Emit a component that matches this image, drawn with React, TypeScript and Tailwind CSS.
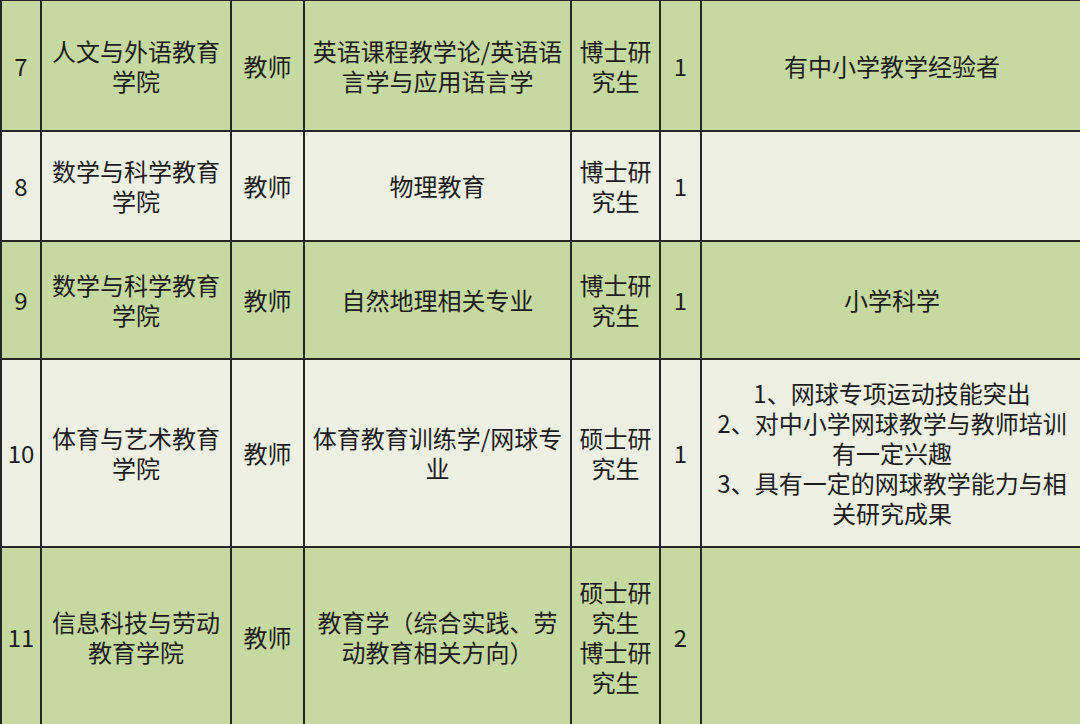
import React from "react";

const G = "bg-[#c6d9a0]";
const L = "bg-[#edf0e3]";

type Row = {
  bg: string;
  h: string;
  no: string;
  college: React.ReactNode;
  pos: string;
  major: React.ReactNode;
  degree: React.ReactNode;
  num: string;
  note: React.ReactNode;
};

const rows: Row[] = [
  {
    bg: G,
    h: "h-[131px]",
    no: "7",
    college: (<>人文与外语教育<br />学院</>),
    pos: "教师",
    major: (<>英语课程教学论/英语语<br />言学与应用语言学</>),
    degree: (<>博士研<br />究生</>),
    num: "1",
    note: "有中小学教学经验者",
  },
  {
    bg: L,
    h: "h-[110px]",
    no: "8",
    college: (<>数学与科学教育<br />学院</>),
    pos: "教师",
    major: "物理教育",
    degree: (<>博士研<br />究生</>),
    num: "1",
    note: "",
  },
  {
    bg: G,
    h: "h-[118px]",
    no: "9",
    college: (<>数学与科学教育<br />学院</>),
    pos: "教师",
    major: "自然地理相关专业",
    degree: (<>博士研<br />究生</>),
    num: "1",
    note: "小学科学",
  },
  {
    bg: L,
    h: "h-[188px]",
    no: "10",
    college: (<>体育与艺术教育<br />学院</>),
    pos: "教师",
    major: (<>体育教育训练学/网球专<br />业</>),
    degree: (<>硕士研<br />究生</>),
    num: "1",
    note: (
      <>
        1、网球专项运动技能突出
        <br />
        2、对中小学网球教学与教师培训
        <br />
        有一定兴趣
        <br />
        3、具有一定的网球教学能力与相
        <br />
        关研究成果
      </>
    ),
  },
  {
    bg: G,
    h: "h-[180px]",
    no: "11",
    college: (<>信息科技与劳动<br />教育学院</>),
    pos: "教师",
    major: (<>教育学（综合实践、劳<br />动教育相关方向）</>),
    degree: (<>硕士研<br />究生<br />博士研<br />究生</>),
    num: "2",
    note: "",
  },
];

const td = "border-2 border-[#262626] text-center align-middle p-0 whitespace-nowrap";

export default function App() {
  return (
    <div
      className="w-[1080px] h-[724px] overflow-hidden bg-[#c6d9a0] text-[#1c1c1c]"
      style={{ fontFamily: '"Noto Sans CJK SC", "Noto Sans", sans-serif' }}
    >
      <table className="border-collapse table-fixed w-[1082px] text-[24px] leading-[30px] -mt-px">
        <colgroup>
          <col className="w-[40px]" />
          <col className="w-[190px]" />
          <col className="w-[73px]" />
          <col className="w-[267px]" />
          <col className="w-[89px]" />
          <col className="w-[41px]" />
          <col className="w-[382px]" />
        </colgroup>
        <tbody>
          {rows.map((r) => (
            <tr key={r.no} className={`${r.bg} ${r.h}`}>
              <td className={td}>{r.no}</td>
              <td className={td}>{r.college}</td>
              <td className={td}>{r.pos}</td>
              <td className={td}>{r.major}</td>
              <td className={td}>{r.degree}</td>
              <td className={td}>{r.num}</td>
              <td className={td}>{r.note}</td>
            </tr>
          ))}
        </tbody>
      </table>
    </div>
  );
}
